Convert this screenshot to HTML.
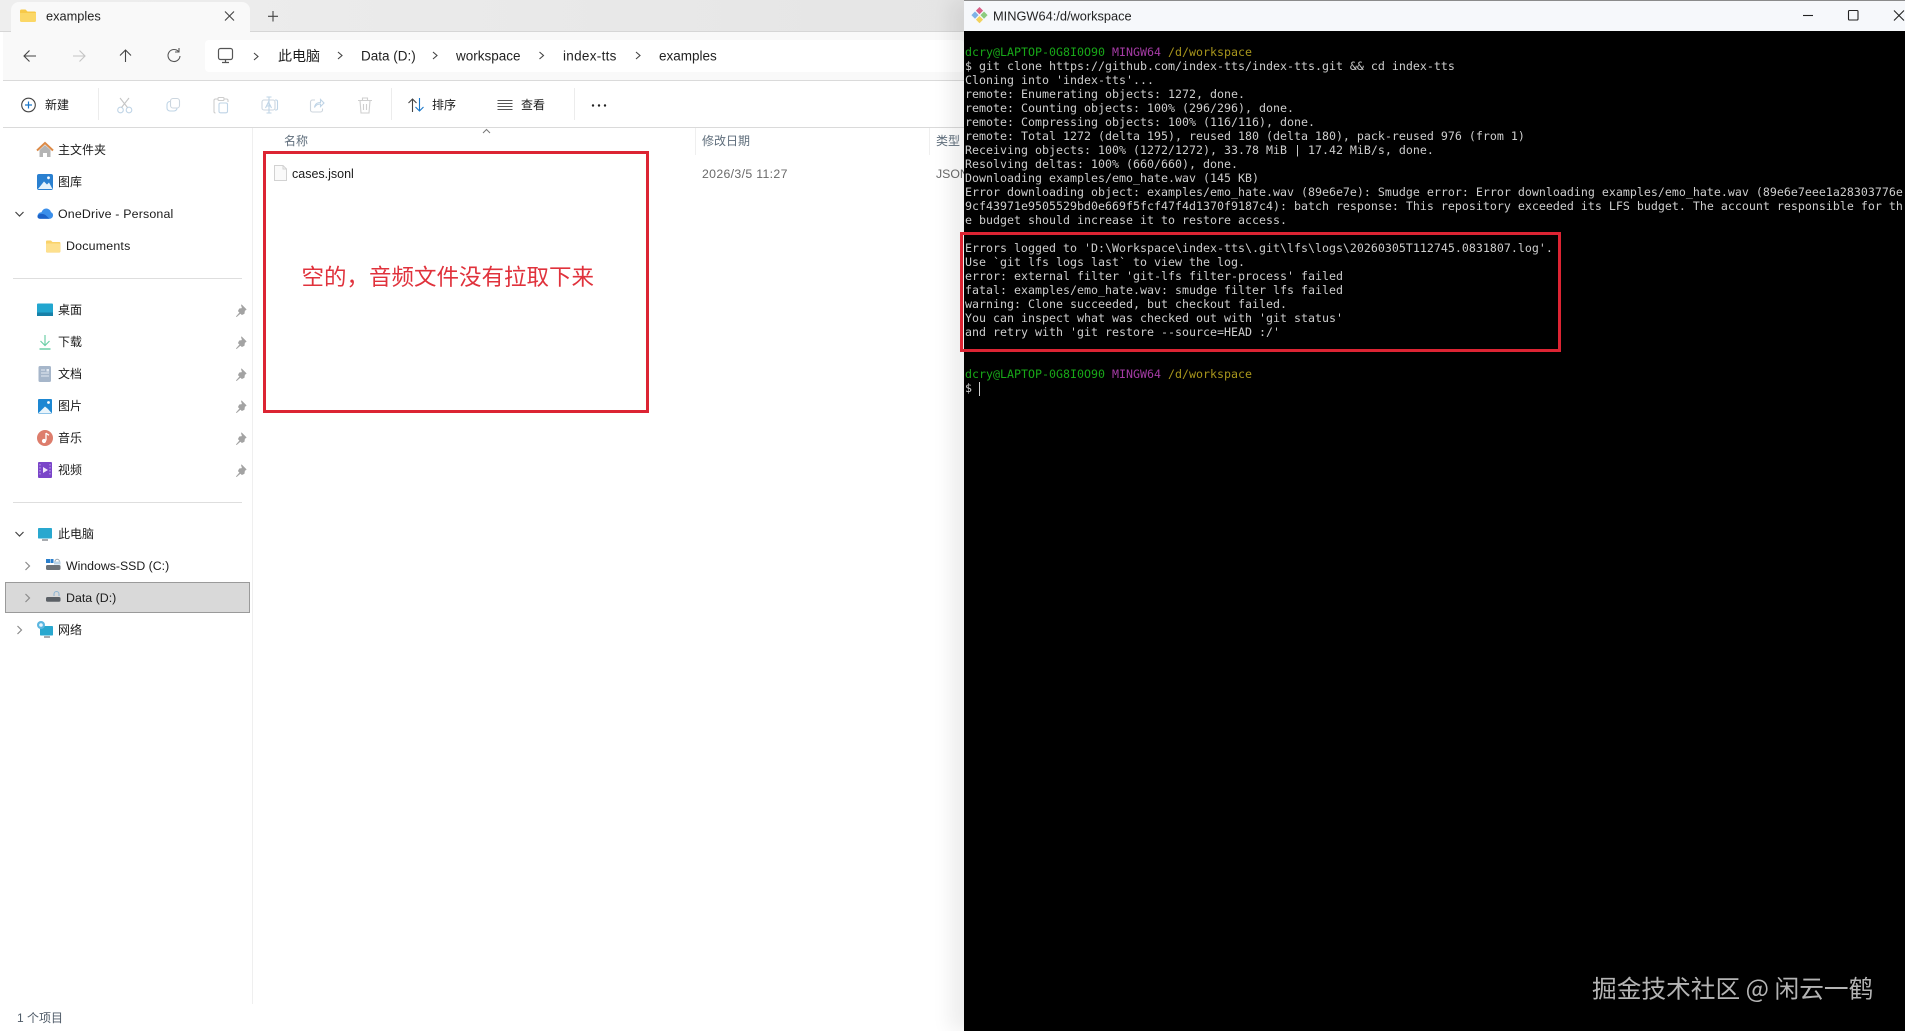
<!DOCTYPE html>
<html lang="zh"><head><meta charset="utf-8"><title>examples</title>
<style>
html,body{margin:0;padding:0;background:#fff;width:1905px;height:1031px;overflow:hidden}
body{position:relative;font-family:"Liberation Sans","Noto Sans CJK SC",sans-serif;font-size:12px;color:#1b1b1b;filter:blur(.3px)}
.a{position:absolute}
.t{position:absolute;white-space:pre;line-height:1;transform:translateY(-50%)}
#term{position:absolute;left:964px;top:0;width:941px;height:1031px;background:#000;overflow:hidden;box-shadow:-14px 0 18px rgba(0,0,0,.07)}
#tt{position:absolute;left:0;top:1px;width:941px;height:30px;background:#f6f8fb}
#out{position:absolute;left:1px;top:45px;margin:0;font-family:"DejaVu Sans Mono","Liberation Mono",monospace;font-size:11.63px;line-height:14px;color:#cdcdcd;white-space:pre}
.g{color:#18a818}.p{color:#a53ba5}.y{color:#a8961c}
</style></head><body>

<!-- explorer backgrounds -->
<div class="a" style="left:0;top:0;width:964px;height:32px;background:linear-gradient(90deg,#eeeeee,#e5e5e5);border-bottom:1px solid #d6d6d6;box-sizing:border-box"></div>
<div class="a" style="left:3px;top:32px;width:961px;height:48px;background:#f9f9f9"></div>
<div class="a" style="left:205px;top:40px;width:759px;height:32px;background:#fff;border-radius:4px"></div>
<div class="a" style="left:3px;top:80px;width:961px;height:1px;background:#dadada"></div>
<div class="a" style="left:3px;top:127px;width:961px;height:1px;background:#dadada"></div>
<div class="a" style="left:11px;top:2px;width:239px;height:30px;background:#f9f9f9;border-radius:8px 8px 0 0"></div>

<svg class="a" style="left:0;top:0" width="964" height="1031" viewBox="0 0 964 1031" fill="none">
 <!-- tab -->
 <path d="M20 11a1.5 1.5 0 0 1 1.5-1.5h4l2 2h7a1.5 1.5 0 0 1 1.5 1.5v7a1.500 1.500 0 0 1-1.500 1.500h-13a1.500 1.500 0 0 1-1.500-1.500z" fill="#f7c948"/>
 <path d="M20 13h16v7.500a1.500 1.500 0 0 1-1.500 1.500h-13a1.500 1.500 0 0 1-1.500-1.500z" fill="#fbd766"/>
 <path d="M225 11.500l9 9M234 11.500l-9 9M273 11v10.500M268 16.300h10" stroke="#444" stroke-width="1.100"/>
 <!-- nav -->
 <path d="M36 56h-11.500M29.500 50.500l-5.500 5.500 5.500 5.500" stroke="#444" stroke-width="1.100"/>
 <path d="M73 56h11.500M79.500 50.500l5.500 5.500-5.500 5.500" stroke="#c4c4c4" stroke-width="1.100"/>
 <path d="M125.500 62v-12M120 55.500l5.500-5.500 5.500 5.500" stroke="#444" stroke-width="1.100"/>
 <path d="M178.500 51.500a6 6 0 1 0 1.500 4.500M179 48v4h-4" stroke="#555" stroke-width="1.100"/>
 <!-- address monitor + chevrons -->
 <rect x="218.500" y="48.500" width="14" height="11" rx="2" stroke="#555" stroke-width="1.200"/>
 <path d="M222 62.500h7M225.500 60v2.500" stroke="#555" stroke-width="1.200"/>
 <g stroke="#444" stroke-width="1.100"><path d="M254 53l4 3.500-4 3.500"/><path d="M338 52l4 3.500-4 3.500"/><path d="M433 52l4 3.500-4 3.500"/><path d="M539.500 52l4 3.500-4 3.500"/><path d="M636 52l4 3.500-4 3.500"/></g>
 <!-- toolbar -->
 <circle cx="28.500" cy="105" r="6.800" stroke="#444" stroke-width="1.100"/>
 <path d="M28.500 101.500v7M25 105h7" stroke="#1976c8" stroke-width="1.200"/>
 <path d="M98.500 88v32M391.500 88v32M574.500 88v32" stroke="#ececec"/>
 <g stroke="#bfd4e6" stroke-width="1.100">
  <circle cx="120.500" cy="110" r="2.800"/><circle cx="129" cy="110" r="2.800"/>
  <path d="M120 98l7.500 9.500M129 98l-7.500 9.500" stroke="#c5c5c5"/>
  <rect x="170.500" y="98.500" width="9" height="9.500" rx="2.500" stroke="#ccd6df"/>
  <path d="M170 101.500a3 3 0 0 0-3 3v3.500a3 3 0 0 0 3 3h4a3 3 0 0 0 3-3"/>
  <path d="M218 99h-2.500a1.500 1.500 0 0 0-1.500 1.500v11a1.500 1.500 0 0 0 1.500 1.500M224 99h2.500a1.500 1.500 0 0 1 1.500 1.500v1.500" stroke="#cdcdcd"/>
  <rect x="218" y="97.500" width="6" height="3" rx="1" stroke="#cdcdcd"/>
  <rect x="219" y="103" width="8.500" height="9.800" rx="1.500"/>
  <rect x="262" y="100" width="13" height="10" rx="2" stroke="#ccd6df"/>
  <path d="M265.500 108l3-6 3 6M266.500 106h4M269 97v16M266.500 97h5M266.500 113h5M275 100h1a1.500 1.500 0 0 1 1.500 1.500v7a1.500 1.500 0 0 1-1.500 1.500h-1"/>
  <path d="M315 100h-2.500a2 2 0 0 0-2 2v8a2 2 0 0 0 2 2h8a2 2 0 0 0 2-2v-1.500" stroke="#cdd5dd"/>
  <path d="M314.500 107.500c.5-3.500 3-5 6-5v-3l3.500 3.500-3.500 3.500v-2.500c-2.500 0-4.500.5-6 3.500z"/>
  <path d="M358 100.500h14M362.500 100v-2h5v2M360 100.500l1 12.500h8l1-12.500M363.500 104v6M366.500 104v6" stroke="#cfcfcf"/>
 </g>
 <path d="M412.500 112v-12.500M408.500 103l4-4 4 4" stroke="#444" stroke-width="1.100"/>
 <path d="M419.500 98v12.500M415.500 107l4 4 4-4" stroke="#1976c8" stroke-width="1.100"/>
 <path d="M497.500 100.500h15M497.500 103.500h15M497.500 106.500h15M497.500 109.500h15" stroke="#555"/>
 <circle cx="593" cy="105.500" r="1.200" fill="#222"/><circle cx="599" cy="105.500" r="1.200" fill="#222"/><circle cx="605" cy="105.500" r="1.200" fill="#222"/>
 <!-- header -->
 <path d="M483 133l3.500-3.500 3.500 3.500" stroke="#777"/>
 <path d="M695.500 128v27M929.500 128v27M252.500 128v876" stroke="#efefef"/>
 <!-- file icon -->
 <path d="M274.500 165.500h8.500l3.500 3.500v11.500h-12z" fill="#fafafa" stroke="#d2d2d2"/>
 <path d="M283 165.500v3.500h3.500" stroke="#d2d2d2"/>
 <!-- sidebar icons -->
 <path d="M37 150.500l8-7.500 8 7.500" stroke="#dc8a47" stroke-width="2"/>
 <path d="M39.500 150l5.500-5 5.500 5v7h-3.500v-4h-4v4h-3.500z" fill="#b4b4b4"/>
 <rect x="37" y="174" width="16" height="16" rx="2" fill="#2a80d0"/>
 <path d="M38 189l6-7.500 3 3 2-2 3.500 6.500z" fill="#e4f2fb"/><circle cx="48.500" cy="177.800" r="1.400" fill="#fff"/>
 <path d="M37.500 216.500c0-2.500 1.800-4.200 4-4.200 1-3 4-4.700 7-3.200 1.500.7 2.300 1.800 2.500 3.200 1.500.5 2.300 2 2 3.400-.3 2-2 3-3.500 3h-9c-1.800 0-3-1-3-2.200z" fill="#3b8fea"/>
 <path d="M37.500 216.500c0-2 4-4 8-1.500l4 3.800h-9.500c-1.500 0-2.500-1.100-2.500-2.300z" fill="#1b62c8"/>
 <path d="M46 241.500a1 1 0 0 1 1-1h4l1.500 1.500h7a.9.900 0 0 1 .9.900v8.600a1 1 0 0 1-1 1h-12.400a1 1 0 0 1-1-1z" fill="#f9d26a"/>
 <rect x="46" y="243.500" width="14" height="8.500" rx=".8" fill="#fde08e"/>
 <rect x="37" y="303.500" width="16" height="12.500" rx="1" fill="#22a6cf"/><rect x="37" y="312.500" width="16" height="3.500" fill="#1780a8"/>
 <path d="M45 335v10M40.500 341l4.500 4.500 4.500-4.500" stroke="#6dcfa8" stroke-width="1.200"/>
 <path d="M39.500 349h11" stroke="#6dcfa8" stroke-width="1.500"/>
 <rect x="38.500" y="366" width="12.500" height="16" rx="1.500" fill="#a6b6ca"/>
 <path d="M41 370h4M41 373h8M41 376h8" stroke="#e4eaf1"/><rect x="46.500" y="369" width="2.500" height="2.500" fill="#e4eaf1"/>
 <rect x="38" y="399" width="14" height="14.500" rx="1" fill="#1d87d2"/>
 <path d="M38.500 413l6.500-6.500 3 2.500 3.500 4z" fill="#e8f4fb"/><circle cx="48.500" cy="402.500" r="1.400" fill="#fff"/>
 <circle cx="45" cy="438" r="8" fill="#dd7d6c"/>
 <path d="M46 433v7.500" stroke="#fff" stroke-width="1.300"/><circle cx="44" cy="441" r="2.100" fill="#fff"/><path d="M46 433c1 1.200 2 1.500 3 2.300" stroke="#fff" stroke-width="1.300"/>
 <rect x="38" y="462" width="14" height="16" rx="1" fill="#7a45c9"/>
 <path d="M43 467l5 3-5 3z" fill="#f1e8fb"/>
 <path d="M40 464v12M50 464v12" stroke="#b392e6" stroke-width="1.300" stroke-dasharray="1.500 1.500"/>
 <g fill="#a3a3a3" stroke="#a3a3a3" stroke-width=".9" stroke-linejoin="round" transform="translate(-1.500 .5)">
  <path d="M243 304.500l4.500 4.500-1.500 1-.5 3-2 1-1.500-1.500-4 3.500 3.500-4-1.500-1.500 1-2 3-.5z"/>
  <path d="M243 336.500l4.500 4.500-1.500 1-.5 3-2 1-1.500-1.500-4 3.500 3.500-4-1.500-1.500 1-2 3-.5z"/>
  <path d="M243 368.500l4.500 4.500-1.500 1-.5 3-2 1-1.500-1.500-4 3.500 3.500-4-1.500-1.500 1-2 3-.5z"/>
  <path d="M243 400.500l4.500 4.500-1.500 1-.5 3-2 1-1.500-1.500-4 3.500 3.500-4-1.500-1.500 1-2 3-.5z"/>
  <path d="M243 432.500l4.500 4.500-1.500 1-.5 3-2 1-1.500-1.500-4 3.500 3.500-4-1.500-1.500 1-2 3-.5z"/>
  <path d="M243 464.500l4.500 4.500-1.500 1-.5 3-2 1-1.500-1.500-4 3.500 3.500-4-1.500-1.500 1-2 3-.5z"/>
 </g>
 <path d="M13 278.500h229M13 502.500h229" stroke="#dedede"/>
 <path d="M15.500 212l4 4 4-4M15.500 532l4 4 4-4" stroke="#444" stroke-width="1.200"/>
 <path d="M25.500 562l4 4-4 4M25.500 594l4 4-4 4M17.500 626l4 4-4 4" stroke="#8a8a8a" stroke-width="1.200"/>
 <!-- this pc -->
 <rect x="38" y="528" width="14" height="10.500" rx=".8" fill="#29a8cf"/>
 <path d="M42 540h6" stroke="#8a8f94" stroke-width="1.500"/>
</svg>

<!-- selected row -->
<div class="a" style="left:5px;top:582px;width:245px;height:31px;box-sizing:border-box;background:#d9d9d9;border:1px solid #9a9a9a"></div>
<svg class="a" style="left:0;top:550px" width="70" height="95" viewBox="0 550 70 95" fill="none">
 <path d="M25.500 594l4 4-4 4" stroke="#8a8a8a" stroke-width="1.200"/>
 <rect x="46" y="565" width="14.500" height="5" rx="1.500" fill="#6c7278"/>
 <rect x="46" y="559" width="4" height="4" fill="#2a7fcc"/><rect x="50.500" y="559" width="3" height="4" fill="#2a7fcc"/>
 <path d="M55 563.500v-2a2.200 2.200 0 0 1 4.400 0v2" stroke="#9aa3ab"/><rect x="54" y="561.500" width="6.500" height="3" fill="#b8d2e6"/>
 <rect x="46" y="597" width="14.500" height="4.800" rx="1.500" fill="#5b6066"/>
 <path d="M54 596v-2a2.500 2.500 0 0 1 5 0v2" stroke="#8cb4d2"/>
 <rect x="40" y="626" width="13" height="9.500" rx=".8" fill="#29a8cf"/>
 <path d="M44 637h6" stroke="#8a8f94" stroke-width="1.500"/>
 <circle cx="41" cy="625" r="4" fill="#5bb6e0"/><circle cx="41" cy="625" r="1.800" fill="#e8f6fd"/>
</svg>

<!-- explorer text -->
<div class="t" style="left:46px;top:17px;font-size:12.8px;color:#222">examples</div>
<div class="t" style="left:278px;top:56px;font-size:14px">此电脑</div>
<div class="t" style="left:361px;top:56px;font-size:13.5px;color:#222">Data (D:)</div>
<div class="t" style="left:456px;top:56px;font-size:13.5px;color:#222">workspace</div>
<div class="t" style="left:563px;top:56px;font-size:13.5px;color:#222;letter-spacing:.3px">index-tts</div>
<div class="t" style="left:659px;top:56px;font-size:13.5px;color:#222">examples</div>
<div class="t" style="left:45px;top:105px">新建</div>
<div class="t" style="left:432px;top:105px">排序</div>
<div class="t" style="left:521px;top:105px">查看</div>
<div class="t" style="left:284px;top:141px;color:#5f6e7c">名称</div>
<div class="t" style="left:702px;top:141px;color:#5f6e7c">修改日期</div>
<div class="t" style="left:936px;top:141px;color:#5f6e7c">类型</div>
<div class="t" style="left:292px;top:174px;font-size:12.5px">cases.jsonl</div>
<div class="t" style="left:702px;top:174px;color:#6a6a6a;font-size:12.3px;letter-spacing:.33px">2026/3/5 11:27</div>
<div class="t" style="left:936px;top:174px;color:#6a6a6a;font-size:12.3px">JSON</div>

<div class="t" style="left:58px;top:150px">主文件夹</div>
<div class="t" style="left:58px;top:182px">图库</div>
<div class="t" style="left:58px;top:214px;font-size:12.4px;letter-spacing:.17px">OneDrive - Personal</div>
<div class="t" style="left:66px;top:246px;font-size:12.4px;letter-spacing:.2px">Documents</div>
<div class="t" style="left:58px;top:310px">桌面</div>
<div class="t" style="left:58px;top:342px">下载</div>
<div class="t" style="left:58px;top:374px">文档</div>
<div class="t" style="left:58px;top:406px">图片</div>
<div class="t" style="left:58px;top:438px">音乐</div>
<div class="t" style="left:58px;top:470px">视频</div>
<div class="t" style="left:58px;top:534px">此电脑</div>
<div class="t" style="left:66px;top:566px;font-size:12.3px">Windows-SSD (C:)</div>
<div class="t" style="left:66px;top:598px;font-size:12.4px">Data (D:)</div>
<div class="t" style="left:58px;top:630px">网络</div>
<div class="t" style="left:17px;top:1018px;color:#4f5b68">1 个项目</div>

<div class="t" style="left:301.500px;top:275.500px;font-size:22.5px;color:#e0323c;font-family:'Noto Sans CJK SC','Liberation Sans',sans-serif">空的，音频文件没有拉取下来</div>
<div class="a" style="left:263px;top:151px;width:386px;height:262px;box-sizing:border-box;border:3px solid #dc2433"></div>

<!-- terminal -->
<div id="term">
 <div class="a" style="left:0;top:0;width:941px;height:1px;background:#8b8b8b"></div>
 <div id="tt"></div>
 <svg class="a" style="left:0;top:0" width="941" height="31" viewBox="964 0 941 31" fill="none">
  <path d="M979.500 7l3.600 3.600-3.600 3.600-3.600-3.600z" fill="#d95f88"/>
  <path d="M975 11.500l3.600 3.600-3.600 3.600-3.600-3.600z" fill="#7fb2e6"/>
  <path d="M984 11.500l3.600 3.600-3.600 3.600-3.600-3.600z" fill="#8ccb7e"/>
  <path d="M979.500 16l3.600 3.600-3.600 3.600-3.600-3.600z" fill="#f2d25e"/>
  <path d="M1803 15.500h10" stroke="#222" stroke-width="1.100"/>
  <rect x="1848.500" y="10.500" width="9.500" height="9.500" rx="1" stroke="#222" stroke-width="1.100"/>
  <path d="M1894 10.500l10 10M1904 10.500l-10 10" stroke="#222" stroke-width="1.100"/>
 </svg>
 <div class="t" style="left:29px;top:16.500px;font-size:12.8px;color:#222">MINGW64:/d/workspace</div>
 <pre id="out"><span class="g">dcry@LAPTOP-0G8I0O90</span> <span class="p">MINGW64</span> <span class="y">/d/workspace</span>
$ git clone https://github.com/index-tts/index-tts.git &amp;&amp; cd index-tts
Cloning into 'index-tts'...
remote: Enumerating objects: 1272, done.
remote: Counting objects: 100% (296/296), done.
remote: Compressing objects: 100% (116/116), done.
remote: Total 1272 (delta 195), reused 180 (delta 180), pack-reused 976 (from 1)
Receiving objects: 100% (1272/1272), 33.78 MiB | 17.42 MiB/s, done.
Resolving deltas: 100% (660/660), done.
Downloading examples/emo_hate.wav (145 KB)
Error downloading object: examples/emo_hate.wav (89e6e7e): Smudge error: Error downloading examples/emo_hate.wav (89e6e7eee1a28303776e
9cf43971e9505529bd0e669f5fcf47f4d1370f9187c4): batch response: This repository exceeded its LFS budget. The account responsible for th
e budget should increase it to restore access.

Errors logged to 'D:\Workspace\index-tts\.git\lfs\logs\20260305T112745.0831807.log'.
Use `git lfs logs last` to view the log.
error: external filter 'git-lfs filter-process' failed
fatal: examples/emo_hate.wav: smudge filter lfs failed
warning: Clone succeeded, but checkout failed.
You can inspect what was checked out with 'git status'
and retry with 'git restore --source=HEAD :/'


<span class="g">dcry@LAPTOP-0G8I0O90</span> <span class="p">MINGW64</span> <span class="y">/d/workspace</span>
$</pre>
 <div class="a" style="left:15px;top:382px;width:1px;height:14px;background:#cfcfcf"></div>
 <div class="t" style="left:628px;top:988px;font-size:24.7px;color:#b4b4b4;font-family:'Noto Sans CJK SC','Liberation Sans',sans-serif">掘金技术社区 @ 闲云一鹤</div>
</div>
<div class="a" style="left:960px;top:232px;width:601px;height:120px;box-sizing:border-box;border:3px solid #dc2433"></div>
</body></html>
